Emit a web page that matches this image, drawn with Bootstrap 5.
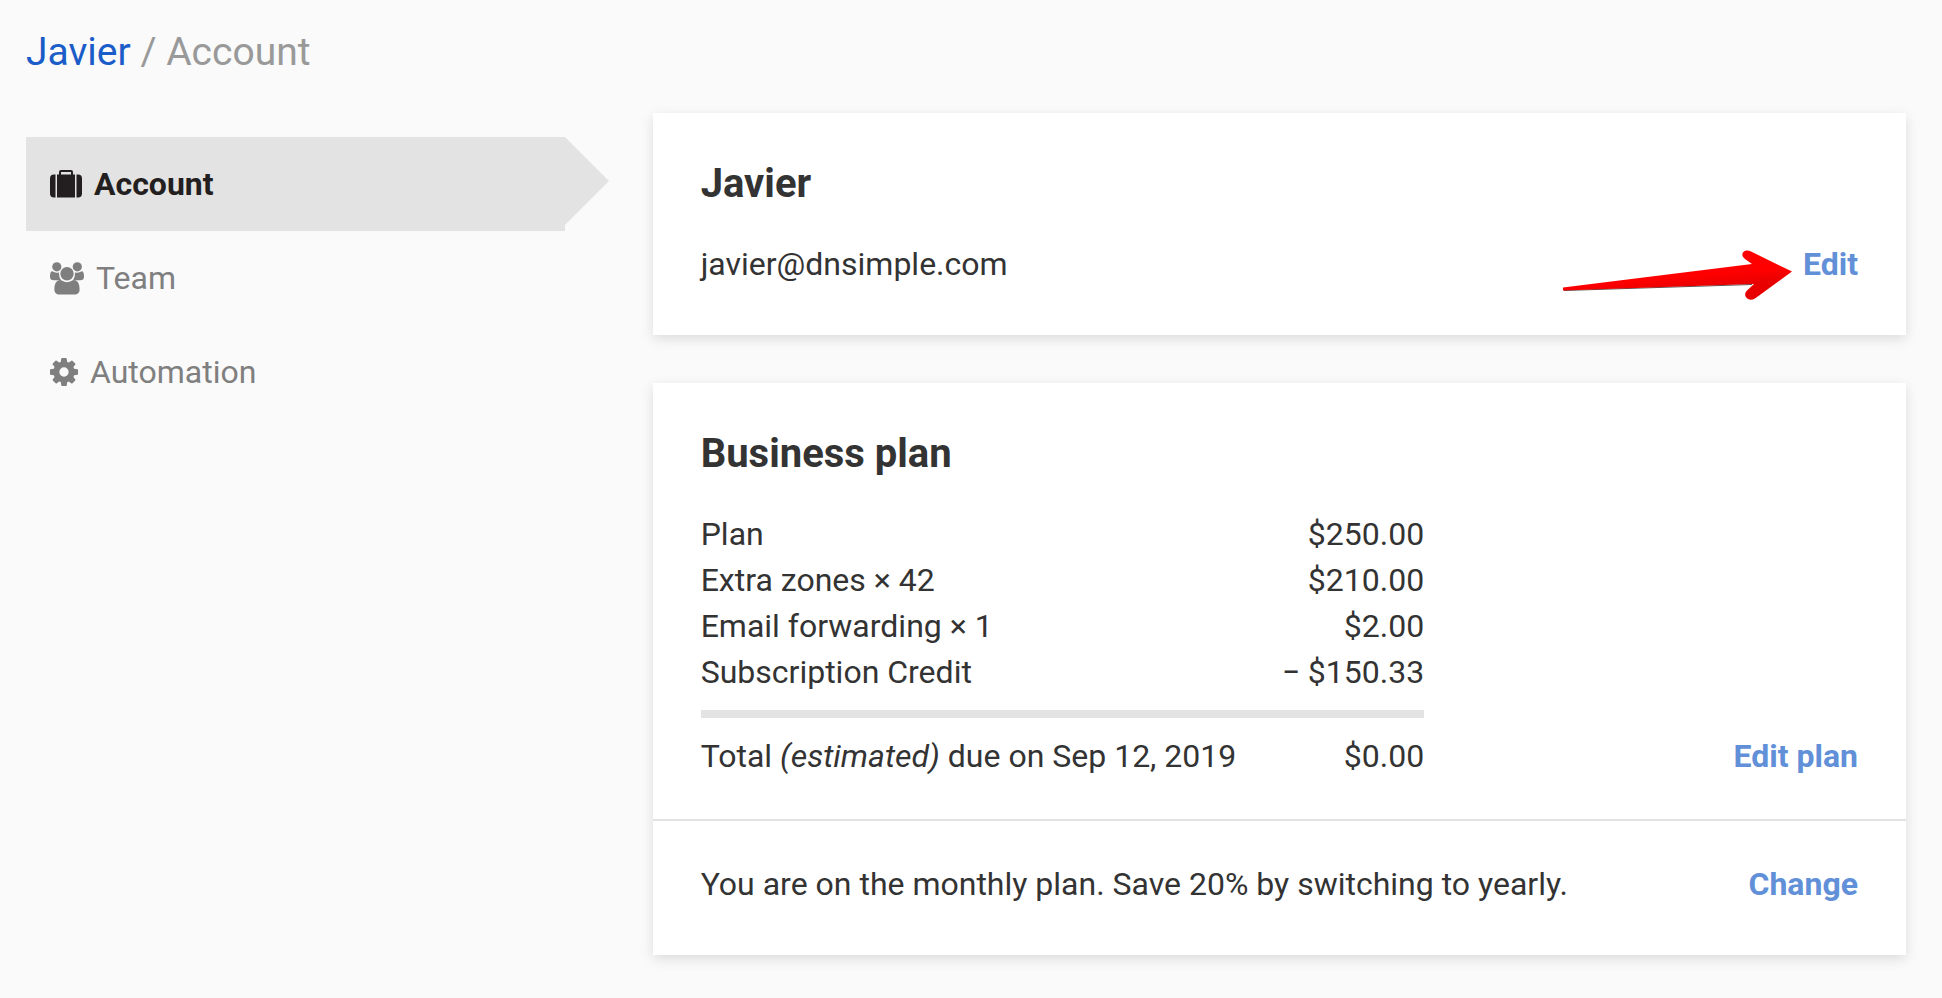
<!DOCTYPE html>
<html lang="en">
<head>
<meta charset="utf-8">
<meta name="viewport" content="width=device-width, initial-scale=1">
<title>Javier / Account</title>
<link href="https://cdn.jsdelivr.net/npm/bootstrap@5.3.0/dist/css/bootstrap.min.css" rel="stylesheet">
<style>
  body { background: #fafafa; color: #333; font-family: Roboto, "Liberation Sans", sans-serif; font-size: 32px; line-height: 46px; }
  a { text-decoration: none; }
  .page { padding: 29px 36px 43px 26px; }
  .crumbs { font-size: 39px; line-height: 46px; margin-bottom: 38px; color: #999; }
  .crumbs a { color: #1a5cc8; }
  .side { padding: 24px 88px 0 0; }
  .side .nav-link { display: flex; align-items: center; gap: 12px; padding: 24px; color: #7f7f7f; position: relative; }
  .side .nav-link.active { background: #e3e3e3; color: #231f20; font-weight: 700; }
  .side .nav-link.active::after { content: ""; position: absolute; left: 100%; top: 0; border: 44px solid transparent; border-left-color: #e3e3e3; border-right: 0; }
  .side svg { fill: currentColor; flex: none; }
  .panels { display: grid; gap: 48px; }
  .panel { border: 0; border-radius: 0; background: #fff; color: inherit; box-shadow: 0 4px 12px rgba(0, 0, 0, .12); }
  .panel-part { padding: 48px; }
  .panel-part.upper { padding-bottom: 40px; }
  .panel-part.lower { padding-top: 40px; border-top: 2px solid #e3e3e3; }
  .panel h2 { font-size: 40px; line-height: 46px; font-weight: 700; margin-bottom: 34px; }
  .action { color: #6190d8; font-weight: 700; white-space: nowrap; }
  .charges { padding-right: 48px; }
  .charges table { width: 100%; border-collapse: separate; border-spacing: 0; }
  .charges th, .charges td { padding: 0; font-weight: 400; }
  .charges td { text-align: right; }
  .charges tbody tr:last-child > * { padding-bottom: 15px; }
  .charges tfoot tr > * { border-top: 8px solid #e3e3e3; padding-top: 15px; }
  .pointer { position: absolute; right: 100%; top: 0; margin-right: 8px; }
</style>
</head>
<body>
<div class="container-fluid page">
  <nav class="crumbs" aria-label="Breadcrumb"><a href="#">Javier</a> / <span>Account</span></nav>

  <div class="row g-0">
    <aside class="col-4 side">
      <ul class="nav flex-column">
        <li class="nav-item">
          <a class="nav-link active" href="#" aria-current="page">
            <svg width="32" height="28" viewBox="0 0 32 28" aria-hidden="true">
              <path d="M5.500 4.500V27.500H4a4 4 0 0 1-4-4v-15a4 4 0 0 1 4-4zM26.500 4.500H28a4 4 0 0 1 4 4v15a4 4 0 0 1-4 4h-1.500zM7 4.500H9V2a2 2 0 0 1 2-2H21a2 2 0 0 1 2 2V4.500H25V27.500H7zM11 4.500H21V2H11z"/>
            </svg>
            Account
          </a>
        </li>
        <li class="nav-item">
          <a class="nav-link" href="#">
            <svg width="34" height="33" viewBox="0 0 34 33" aria-hidden="true">
              <circle cx="6.800" cy="4.800" r="4.600"/>
              <circle cx="27.300" cy="4.800" r="4.600"/>
              <circle cx="17" cy="11.800" r="6.700"/>
              <path d="M2.300 9.300Q4.500 10.700 6.900 10.700 8 10.700 9.200 10.200 9 11 9 11.900 9 15.300 11 18.300H3.800Q0 18.200 0 14.700 0 9.300 2.300 9.300zM31.700 9.300Q29.500 10.700 27.100 10.700 26 10.700 24.800 10.200 25 11 25 11.900 25 15.300 23 18.300H30.200Q34 18.200 34 14.700 34 9.300 31.700 9.300z"/>
              <path d="M10.500 18.100C11.300 18.100 13.300 20.300 17 20.300S22.700 18.100 23.500 18.100C28 18.100 29.600 22.500 29.600 27.500 29.600 30.800 27.500 32.600 24.700 32.600H9.300C6.500 32.600 4.400 30.800 4.400 27.500 4.400 22.500 6 18.100 10.500 18.100z"/>
            </svg>
            Team
          </a>
        </li>
        <li class="nav-item">
          <a class="nav-link" href="#">
            <svg width="28" height="28" viewBox="0 0 1536 1536" aria-hidden="true">
              <path d="M1024 768q0-106-75-181t-181-75-181 75-75 181 75 181 181 75 181-75 75-181zm512-109v222q0 12-8 23t-20 13l-185 28q-19 54-39 91 35 50 107 138 10 12 10 25t-9 23q-27 37-99 108t-94 71q-12 0-26-9l-138-108q-44 23-91 38-16 136-29 186-7 28-36 28H657q-14 0-24.500-8.500T621 1506l-28-184q-49-16-90-37l-141 107q-10 9-25 9-14 0-25-11-126-114-165-168-7-10-7-23 0-12 8-23 15-21 51-66.500t54-70.500q-27-50-41-99L29 913q-13-2-21-12.500T0 877V655q0-12 8-23t19-13l186-28q14-46 39-92-40-57-107-138-10-12-10-24 0-10 9-23 26-36 98.500-107.500T337 135q13 0 26 10l138 107q44-23 91-38 16-136 29-186 7-28 36-28h222q14 0 24.500 8.500T915 30l28 184q49 16 90 37l142-107q9-9 24-9 13 0 25 10 129 119 165 170 7 8 7 22 0 12-8 23-15 21-51 66.500t-54 70.500q26 50 41 98l183 28q13 2 21 12.500t8 23.500z"/>
            </svg>
            Automation
          </a>
        </li>
      </ul>
    </aside>

    <main class="col-8 panels">
      <section class="card panel">
        <div class="panel-part">
          <h2>Javier</h2>
          <div class="d-flex justify-content-between">
            <span>javier@dnsimple.com</span>
            <div class="position-relative">
              <a class="action" href="#">Edit</a>
              <svg class="pointer" width="236" height="60" viewBox="0 0 236 60" aria-hidden="true">
                <defs>
                  <linearGradient id="red" gradientUnits="userSpaceOnUse" x1="180" y1="8" x2="184" y2="58">
                    <stop offset=".45" stop-color="#ff0000"/>
                    <stop offset=".7" stop-color="#e80000"/>
                  </linearGradient>
                </defs>
                <path d="M5 49.500L193 43.500" stroke="#555" stroke-width="1" fill="none"/>
                <path fill="url(#red)" d="M4 46.500L193 23 186 18C180 13.500 185 7 192 10.500L233 30.500 196 57.500C189 61.500 183 54.500 188 49.500L195 43 4 49.500z"/>
              </svg>
            </div>
          </div>
        </div>
      </section>

      <section class="card panel">
        <div class="panel-part upper">
          <h2>Business plan</h2>
          <div class="row g-0 align-items-end">
            <div class="col-8 charges">
              <table>
                <tbody>
                  <tr><th scope="row">Plan</th><td>$250.00</td></tr>
                  <tr><th scope="row">Extra zones × 42</th><td>$210.00</td></tr>
                  <tr><th scope="row">Email forwarding × 1</th><td>$2.00</td></tr>
                  <tr><th scope="row">Subscription Credit</th><td>− $150.33</td></tr>
                </tbody>
                <tfoot>
                  <tr><th scope="row">Total <em>(estimated)</em> due on Sep 12, 2019</th><td>$0.00</td></tr>
                </tfoot>
              </table>
            </div>
            <div class="col-4 text-end"><a class="action" href="#">Edit plan</a></div>
          </div>
        </div>
        <div class="panel-part lower d-flex justify-content-between">
          <span>You are on the monthly plan. Save 20% by switching to yearly.</span>
          <a class="action" href="#">Change</a>
        </div>
      </section>
    </main>
  </div>
</div>
<script src="https://cdn.jsdelivr.net/npm/bootstrap@5.3.0/dist/js/bootstrap.bundle.min.js"></script>
</body>
</html>
